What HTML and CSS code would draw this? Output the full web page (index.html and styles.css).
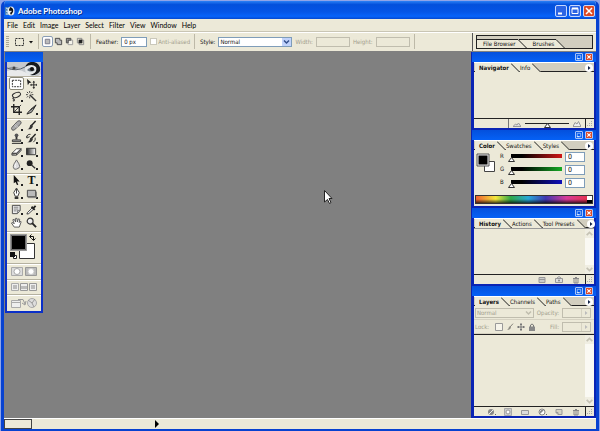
FILE: index.html
```html
<!DOCTYPE html>
<html lang="en">
<head>
    <meta charset="UTF-8">
    <title>Adobe Photoshop</title>
    <link rel="stylesheet" href="styles.css">
</head>

<body>

<!-- Shared icons -->
<svg class="defs" aria-hidden="true">
    <symbol id="slant" viewBox="0 0 9 9"><path d="M0 9V0L9 9Z" fill="#ece9d8"/><path d="M0 .5L8.500 9" stroke="#222" fill="none"/></symbol>
    <symbol id="flyout" viewBox="0 0 8 8"><circle cx="4" cy="4" r="4" fill="#fff"/><path d="M3 2L5.500 4L3 6Z" fill="#124"/></symbol>
    <symbol id="min" viewBox="0 0 7 7"><path d="M1.500 1.500H5.500V5.500H1.500Z" fill="none" stroke="#9cc3ff"/><path d="M1 5.500H4" stroke="#fff"/></symbol>
    <symbol id="cross" viewBox="0 0 7 7"><path d="M1.500 1.500L5.500 5.500M5.500 1.500L1.500 5.500" stroke="#fff" stroke-width="1.300"/></symbol>
    <symbol id="down" viewBox="0 0 8 8"><path d="M1.500 2.500L4 5L6.500 2.500" fill="none" stroke="currentColor" stroke-width="1.500"/></symbol>
    <symbol id="up" viewBox="0 0 8 8"><path d="M1.500 5.500L4 3L6.500 5.500" fill="none" stroke="currentColor" stroke-width="1.500"/></symbol>
    <symbol id="page" viewBox="0 0 10 8"><path d="M2 1.500H8V6.500H4L2 4.500ZM2 4.500H4V6.500" fill="#d8d5c5" stroke="#999"/></symbol>
    <symbol id="trash" viewBox="0 0 10 8"><path d="M2 2.500H8M4 1.500H6M3 3V7H7V3M5 3V7" fill="none" stroke="#888"/></symbol>
    <symbol id="grip" viewBox="0 0 8 8"><path d="M5 2H7M3 4H7M1 6H7" stroke="#aaa" stroke-dasharray="1 1"/></symbol>
    <symbol id="brush" viewBox="0 0 12 12"><path d="M10.500 1L6 6" stroke="#222" stroke-width="1.500"/><path d="M6.500 5Q4 5 4 7.500Q3.500 9.500 1.500 10Q6 11 7.500 7Z" fill="#333"/></symbol>
</svg>

<div class="window">

    <header class="titlebar">
        <svg class="app-icon" viewBox="0 0 10 10"><path d="M0 1H4V9H0Z" fill="#4b7fb5"/><path d="M1 2L3 3M1 5L3 6M1 8H3" stroke="#cfe5f7"/><ellipse cx="6" cy="5" rx="3.500" ry="4.500" fill="#e8ecef"/><path d="M5 1Q9 2 8 6L6 9L5 7L7 5L4 4Z" fill="#111"/><circle cx="5" cy="4" r="1" fill="#222"/></svg>
        <h1>Adobe Photoshop</h1>
        <div class="window-buttons">
            <button class="win-btn" aria-label="Minimize"><svg viewBox="0 0 10 10"><path d="M2 7.500H6" stroke="#fff" stroke-width="2"/></svg></button>
            <button class="win-btn" aria-label="Maximize"><svg viewBox="0 0 10 10"><path d="M2 2.500H8V7.500H2Z" fill="none" stroke="#fff"/><path d="M2 2.500H8" stroke="#fff" stroke-width="2"/></svg></button>
            <button class="win-btn close" aria-label="Close"><svg viewBox="0 0 10 10"><path d="M2 2L8 8M8 2L2 8" stroke="#fff" stroke-width="1.500"/></svg></button>
        </div>
    </header>

    <nav class="menubar">
        <a href="#">File</a>
        <a href="#">Edit</a>
        <a href="#">Image</a>
        <a href="#">Layer</a>
        <a href="#">Select</a>
        <a href="#">Filter</a>
        <a href="#">View</a>
        <a href="#">Window</a>
        <a href="#">Help</a>
    </nav>

    <!-- Tool options -->
    <div class="options">
        <div class="option-group current-tool">
            <span class="gripper"></span>
            <button class="tool-preset" aria-label="Tool preset">
                <svg viewBox="0 0 20 10"><path d="M1.500 1.500H9.500V8.500H1.500Z" fill="none" stroke="#333" stroke-dasharray="2 1"/><path d="M15 4H19L17 6.500Z" fill="#111"/></svg>
            </button>
        </div>
        <div class="option-group modes">
            <button class="mode pressed" aria-label="New selection"><svg viewBox="0 0 10 10"><path d="M2.500 2.500H7.500V7.500H2.500Z" fill="#bbb" stroke="#778"/></svg></button>
            <button class="mode" aria-label="Add to selection"><svg viewBox="0 0 10 10"><path d="M1.500 1.500H6.500V3.500H8.500V8.500H3.500V6.500H1.500Z" fill="#bbb" stroke="#444"/></svg></button>
            <button class="mode" aria-label="Subtract from selection"><svg viewBox="0 0 10 10"><path d="M3.500 3.500H8.500V8.500H3.500Z" fill="#f5f3ea" stroke="#999"/><path d="M1.500 6.500V1.500H6.500V3.500H3.500V6.500Z" fill="#999" stroke="#444"/></svg></button>
            <button class="mode" aria-label="Intersect with selection"><svg viewBox="0 0 10 10"><path d="M1.500 1.500H6.500V6.500H1.500ZM3.500 3.500H8.500V8.500H3.500Z" fill="none" stroke="#888"/><path d="M3 3H7V7H3Z" fill="#222"/></svg></button>
        </div>
        <div class="option-group">
            <label for="feather">Feather:</label>
            <input type="text" id="feather" class="field short" value="0 px">
            <input type="checkbox" id="antialiased" disabled>
            <label for="antialiased" class="off check-label">Anti-aliased</label>
        </div>
        <div class="option-group">
            <label for="style">Style:</label>
            <span class="dropdown style-drop">
                <select id="style"><option>Normal</option></select>
                <svg class="drop-arrow"><use href="#down"/></svg>
            </span>
            <label for="width" class="off">Width:</label>
            <input type="text" id="width" class="field" disabled>
            <label for="height" class="off">Height:</label>
            <input type="text" id="height" class="field" disabled>
        </div>
        <div class="well">
            <div class="tabs well-tabs">
                <button class="tab">File Browser</button><svg class="slant"><use href="#slant"/></svg>
                <button class="tab">Brushes</button><svg class="slant"><use href="#slant"/></svg>
            </div>
        </div>
    </div>

    <main class="workspace">

        <!-- Toolbox -->
        <aside class="toolbox">
            <div class="palette-title"></div>
            <svg class="logo" viewBox="0 0 34 14" preserveAspectRatio="none">
                <path d="M0 0H34V14H0Z" fill="#c5c9cd"/><path d="M0 9Q10 5 20 11T34 12V14H0Z" fill="#e9eaea"/>
                <path d="M1 6Q7 3 12 6Q7 8 1 6" fill="#8f979e"/><path d="M0 6Q9 10 18 5" stroke="#59636b" fill="none"/><circle cx="7" cy="6" r="1.500" fill="#444"/>
                <circle cx="25" cy="7" r="7" fill="#e4e8ea"/><path d="M18 5Q21 -1 27 0Q34 2 33 9Q30 14 23 13Q31 11 29 5Q25 1 18 5Z" fill="#15191d"/><path d="M20 8Q24 3 28 8Q24 11 20 8" fill="#68737d"/><circle cx="25" cy="7" r="2" fill="#111"/>
            </svg>
            <div class="tools">
                <button class="tool pressed" aria-label="Marquee"><svg viewBox="0 0 12 12"><path d="M1.500 2.500H10.500V9.500H1.500Z" fill="#fff" stroke="#222" stroke-dasharray="2 1"/></svg></button>
                <button class="tool" aria-label="Move"><svg viewBox="0 0 12 12"><path d="M1 1L6 5L3.500 5.500L2 8Z" fill="#222"/><path d="M8.500 4V11M5 7.500H12" stroke="#222"/><path d="M7 5L8.500 3L10 5ZM7 10L8.500 12L10 10ZM6 6V9L4.500 7.500ZM11 6V9L12 7.500Z" fill="#222"/></svg></button>
                <button class="tool more" aria-label="Lasso"><svg viewBox="0 0 12 12"><path d="M3 7Q0 5 3 3T9 1.500Q12 3 9 5.500T3 7Q1 8 3 9T2 11" fill="none" stroke="#333" stroke-width="1.200"/></svg></button>
                <button class="tool" aria-label="Magic wand"><svg viewBox="0 0 12 12"><path d="M4 4L11 11" stroke="#333" stroke-width="1.500"/><path d="M4 0V2M0 4H2M6 4H8M4 6V8M1 1L2.500 2.500M7 1L5.500 2.500M1 7L2.500 5.500" stroke="#333"/></svg></button>
                <button class="tool" aria-label="Crop"><svg viewBox="0 0 12 12"><path d="M3 0V9H12M0 3H9V12" fill="none" stroke="#222" stroke-width="1.500"/><path d="M3 9L11 1" stroke="#333"/></svg></button>
                <button class="tool more" aria-label="Slice"><svg viewBox="0 0 12 12"><path d="M11 1L8 6L5 6Z" fill="#444" stroke="#222"/><path d="M7 5L3 8L1 11L6 9L8 6" fill="#aaa" stroke="#222"/></svg></button>
            </div>
            <div class="tools">
                <button class="tool more" aria-label="Healing brush"><svg viewBox="0 0 12 12"><path d="M1 8L7 1.500Q9 0 10.500 1.500T10 5L4 10.500Q2 12 1 10.500T1 8Z" fill="#aaa" stroke="#555"/><path d="M4 6L7 9M5 5L8 8" stroke="#eee" stroke-dasharray="1 1"/></svg></button>
                <button class="tool more" aria-label="Brush"><svg viewBox="0 0 12 12"><use href="#brush"/></svg></button>
                <button class="tool more" aria-label="Clone stamp"><svg viewBox="0 0 12 12"><circle cx="6" cy="2.500" r="2" fill="#555"/><path d="M6 4V7" stroke="#333" stroke-width="2"/><path d="M1.500 7.500H10.500V9.500H1.500Z" fill="#aaa" stroke="#333"/><path d="M1 11.500H11" stroke="#333"/></svg></button>
                <button class="tool more" aria-label="History brush"><svg viewBox="0 0 12 12"><use href="#brush"/><path d="M1 5Q1 1 5 1.500M0 3L1 5.500L4 4M10 5Q11 8 8 10" fill="none" stroke="#333"/></svg></button>
                <button class="tool more" aria-label="Eraser"><svg viewBox="0 0 12 12"><path d="M1 8L6 3H11L6 8Z" fill="#fff" stroke="#444"/><path d="M1 8V10H6L11 5V3L6 8V10M6 8H1" fill="#999" stroke="#444"/></svg></button>
                <button class="tool more" aria-label="Gradient"><svg viewBox="0 0 12 12"><defs><linearGradient id="grad"><stop stop-color="#222"/><stop offset="1" stop-color="#fff"/></linearGradient></defs><path d="M.5 2.500H10.500V9.500H.5Z" fill="url(#grad)" stroke="#333"/></svg></button>
                <button class="tool more" aria-label="Blur"><svg viewBox="0 0 12 12"><path d="M6 1Q9.500 6 9.500 8T6 11T2.500 8Q2.500 6 6 1Z" fill="#ddd" stroke="#666"/><path d="M5 5Q3.500 8 5 9" stroke="#fff" fill="none"/></svg></button>
                <button class="tool more" aria-label="Burn"><svg viewBox="0 0 12 12"><circle cx="4" cy="4.500" r="3.200" fill="#222"/><path d="M6 6.500L10 10" stroke="#333" stroke-width="1.500"/></svg></button>
            </div>
            <div class="tools">
                <button class="tool more" aria-label="Path selection"><svg viewBox="0 0 12 12"><path d="M3 0L9.500 7H6.500L8 10.500L6.500 11L5 7.500L3 9Z" fill="#111"/></svg></button>
                <button class="tool more type">T</button>
                <button class="tool more" aria-label="Pen"><svg viewBox="0 0 12 12"><path d="M6 0L9 5L7.500 9H4.500L3 5ZM6 1V6" fill="#fff" stroke="#333"/><path d="M4 9.500H8V12H4Z" fill="#333"/></svg></button>
                <button class="tool more" aria-label="Rectangle"><svg viewBox="0 0 12 12"><path d="M1.500 2.500H10.500V9.500H1.500Z" fill="#bbb" stroke="#444"/><path d="M2 10.500H11.500V4" stroke="#777" fill="none"/></svg></button>
            </div>
            <div class="tools">
                <button class="tool more" aria-label="Notes"><svg viewBox="0 0 12 12"><path d="M1.500 1.500H10V7L7 10.500H1.500Z" fill="#eee" stroke="#444"/><path d="M7 10.500V7H10M3 3.500H8M3 5.500H8M3 7.500H6" fill="none" stroke="#777"/></svg></button>
                <button class="tool more" aria-label="Eyedropper"><svg viewBox="0 0 12 12"><path d="M7.500 3.500L1.500 9.500L1 11L3 10.500L9 5" fill="#fff" stroke="#333"/><path d="M6 3L9.500 6.500M8 4.500L10.500 2" stroke="#222" stroke-width="2"/></svg></button>
                <button class="tool" aria-label="Hand"><svg viewBox="0 0 12 12"><path d="M3.500 11L.5 6.500L2 6L3.500 7.500L2 3L3.500 2.500L5 5.500V1.500H6.500L7 5.500L8 2L9.500 2.500L9 6L10.500 4.500L11 5.500L9 11Z" fill="#fff" stroke="#555"/></svg></button>
                <button class="tool" aria-label="Zoom"><svg viewBox="0 0 12 12"><circle cx="4.500" cy="4.500" r="3.200" fill="#eee" stroke="#333" stroke-width="1.300"/><path d="M7 7L11 11" stroke="#222" stroke-width="2"/></svg></button>
            </div>
            <div class="tool-row colors">
                <svg viewBox="0 0 34 31"><path d="M12.500 11.500H27.500V26.500H12.500Z" fill="#fff" stroke="#333"/><path d="M3.500 2.500H19.500V18.500H3.500Z" fill="#000" stroke="#999"/><path d="M4.500 3.500H18.500V17.500H4.500Z" fill="#000" stroke="#ddd" stroke-width=".5"/><path d="M23 4.500H26.500V8M24.500 2.500L22.500 4.500L24.500 6.500M24.500 6.500L26.500 8.500L28.500 6.500" fill="none" stroke="#111"/><path d="M6.500 23.500H9.500V26.500H6.500Z" fill="#fff" stroke="#222"/><path d="M3 20H8V25H3Z" fill="#111"/></svg>
            </div>
            <div class="tool-row masks">
                <button class="mini" aria-label="Standard mode"><svg viewBox="0 0 12 9"><path d="M.5 .5H11.500V8.500H.5Z" fill="#ddd" stroke="#aaa"/><circle cx="6" cy="4.500" r="3" fill="#fff" stroke="#aaa"/></svg></button>
                <button class="mini" aria-label="Quick mask"><svg viewBox="0 0 12 9"><path d="M.5 .5H11.500V8.500H.5Z" fill="#bbb" stroke="#999"/><circle cx="6" cy="4.500" r="3" fill="#fff" stroke="#ccc"/></svg></button>
            </div>
            <div class="tool-row screens">
                <button class="mini" aria-label="Standard screen"><svg viewBox="0 0 8 8"><path d="M.5 .5H7.500V7.500H.5Z" fill="#eee" stroke="#aaa"/><path d="M2 2H6V6H2Z" fill="#bbb"/></svg></button>
                <button class="mini" aria-label="Full screen with menu"><svg viewBox="0 0 8 8"><path d="M.5 .5H7.500V7.500H.5Z" fill="#eee" stroke="#999"/><path d="M1 3H7V6H1Z" fill="#bbb"/></svg></button>
                <button class="mini" aria-label="Full screen"><svg viewBox="0 0 8 8"><path d="M.5 .5H7.500V7.500H.5Z" fill="#eee" stroke="#999"/><path d="M2 2H6V6H2Z" fill="#bbb"/></svg></button>
            </div>
            <div class="tool-row jump">
                <svg viewBox="0 0 28 12"><path d="M1.500 3.500H10.500V10.500H1.500ZM1.500 5.500H10.500" fill="#eee" stroke="#aaa"/><path d="M8 2.500H13L15 7M12 6L15 8L16 4" fill="none" stroke="#999"/><circle cx="22" cy="6" r="4.500" fill="#ddd" stroke="#aaa"/><path d="M18 3L22 6L25 2M22 6L24 10" fill="none" stroke="#999"/></svg>
            </div>
        </aside>

        <!-- Pointer -->
        <svg class="pointer" viewBox="0 0 9 14"><path d="M.5 .5L8 8.500H5L7 12.500L5.500 13.500L3.500 9.500L.5 12Z" fill="#fff" stroke="#222"/></svg>

        <!-- Palettes -->
        <div class="palettes">

            <section class="palette navigator">
                <div class="palette-title">
                    <button class="small-btn" aria-label="Collapse"><svg><use href="#min"/></svg></button>
                    <button class="small-btn close" aria-label="Close"><svg><use href="#cross"/></svg></button>
                </div>
                <div class="tabs">
                    <button class="tab active">Navigator</button><svg class="slant"><use href="#slant"/></svg>
                    <button class="tab">Info</button><svg class="slant"><use href="#slant"/></svg>
                    <button class="flyout" aria-label="Menu"><svg><use href="#flyout"/></svg></button>
                </div>
                <div class="palette-body"></div>
                <div class="zoom-bar">
                    <span class="zoom-value"></span>
                    <svg class="mount" viewBox="0 0 8 6"><path d="M0 5.500L2.500 3L4 4L5.500 2L8 5.500Z" fill="#ddd" stroke="#999"/></svg>
                    <input type="range" class="zoom-range" value="50" aria-label="Zoom">
                    <svg class="mount" viewBox="0 0 8 6"><path d="M0 5.500L2 1.500L4 3L5.500 .5L8 5.500Z" fill="#eee" stroke="#999"/></svg>
                    <svg class="grip"><use href="#grip"/></svg>
                </div>
            </section>

            <section class="palette color">
                <div class="palette-title">
                    <button class="small-btn" aria-label="Collapse"><svg><use href="#min"/></svg></button>
                    <button class="small-btn close" aria-label="Close"><svg><use href="#cross"/></svg></button>
                </div>
                <div class="tabs">
                    <button class="tab active">Color</button><svg class="slant"><use href="#slant"/></svg>
                    <button class="tab">Swatches</button><svg class="slant"><use href="#slant"/></svg>
                    <button class="tab">Styles</button><svg class="slant"><use href="#slant"/></svg>
                    <button class="flyout" aria-label="Menu"><svg><use href="#flyout"/></svg></button>
                </div>
                <div class="palette-body mixer">
                    <svg class="color-pair" viewBox="0 0 20 20"><path d="M8.500 8.500H18.500V18.500H8.500Z" fill="#fff" stroke="#444"/><path d="M1 1H13V13H1Z" fill="#eee" stroke="#555"/><path d="M2.500 2.500H11.500V11.500H2.500Z" fill="#000"/></svg>
                    <div class="channels">
                        <label for="red">R</label><input type="range" class="channel red" min="0" max="255" value="0" aria-label="Red"><input type="text" id="red" class="field" value="0">
                        <label for="green">G</label><input type="range" class="channel green" min="0" max="255" value="0" aria-label="Green"><input type="text" id="green" class="field" value="0">
                        <label for="blue">B</label><input type="range" class="channel blue" min="0" max="255" value="0" aria-label="Blue"><input type="text" id="blue" class="field" value="0">
                    </div>
                </div>
                <div class="spectrum"><span></span></div>
            </section>

            <section class="palette history">
                <div class="palette-title">
                    <button class="small-btn" aria-label="Collapse"><svg><use href="#min"/></svg></button>
                    <button class="small-btn close" aria-label="Close"><svg><use href="#cross"/></svg></button>
                </div>
                <div class="tabs">
                    <button class="tab active">History</button><svg class="slant"><use href="#slant"/></svg>
                    <button class="tab">Actions</button><svg class="slant"><use href="#slant"/></svg>
                    <button class="tab">Tool Presets</button><svg class="slant"><use href="#slant"/></svg>
                    <button class="flyout" aria-label="Menu"><svg><use href="#flyout"/></svg></button>
                </div>
                <div class="palette-body list">
                    <div class="scrollbar"><svg><use href="#up"/></svg><svg><use href="#down"/></svg></div>
                </div>
                <div class="palette-footer">
                    <svg viewBox="0 0 10 8"><path d="M2 1.500H8V6.500H2ZM2 3.500H8" fill="#ccc" stroke="#999"/></svg>
                    <svg viewBox="0 0 10 8"><path d="M1.500 2.500H8.500V6.500H1.500ZM3 2L5 .5L7 2" fill="#ddd" stroke="#999"/><circle cx="5" cy="4.500" r="1" fill="#888"/></svg>
                    <svg><use href="#trash"/></svg>
                    <svg class="grip"><use href="#grip"/></svg>
                </div>
            </section>

            <section class="palette layers">
                <div class="palette-title">
                    <button class="small-btn" aria-label="Collapse"><svg><use href="#min"/></svg></button>
                    <button class="small-btn close" aria-label="Close"><svg><use href="#cross"/></svg></button>
                </div>
                <div class="tabs">
                    <button class="tab active">Layers</button><svg class="slant"><use href="#slant"/></svg>
                    <button class="tab">Channels</button><svg class="slant"><use href="#slant"/></svg>
                    <button class="tab">Paths</button><svg class="slant"><use href="#slant"/></svg>
                    <button class="flyout" aria-label="Menu"><svg><use href="#flyout"/></svg></button>
                </div>
                <div class="layer-row">
                    <span class="dropdown off-drop">
                        <select aria-label="Blend mode" disabled><option>Normal</option></select>
                        <svg class="drop-arrow"><use href="#down"/></svg>
                    </span>
                    <label for="opacity" class="off">Opacity:</label>
                    <span class="stepper"><input type="text" id="opacity" disabled><svg viewBox="0 0 8 8"><path d="M3 2L5.500 4L3 6Z" fill="#bbb"/></svg></span>
                </div>
                <div class="layer-row">
                    <span class="off lock">Lock:</span>
                    <svg class="lock-icon" viewBox="0 0 8 8"><path d="M.5 .5H7.500V7.500H.5Z" fill="#f6f4ea" stroke="#999"/></svg>
                    <svg class="lock-icon"><use href="#brush" opacity=".5"/></svg>
                    <svg class="lock-icon" viewBox="0 0 8 8"><path d="M4 0V8M0 4H8M3 1.500H5M3 6.500H5M1.500 3V5M6.500 3V5" stroke="#777"/></svg>
                    <svg class="lock-icon" viewBox="0 0 8 8"><path d="M2.500 4V2Q4 0 5.500 2V4" fill="none" stroke="#777"/><path d="M1 3.500H7V8H1Z" fill="#888"/></svg>
                    <label for="fill" class="off fill-label">Fill:</label>
                    <span class="stepper"><input type="text" id="fill" disabled><svg viewBox="0 0 8 8"><path d="M3 2L5.500 4L3 6Z" fill="#bbb"/></svg></span>
                </div>
                <div class="palette-body list ruled">
                    <div class="scrollbar"><svg><use href="#up"/></svg><svg><use href="#down"/></svg></div>
                </div>
                <div class="palette-footer">
                    <svg viewBox="0 0 10 8"><circle cx="5" cy="4" r="3" fill="#888"/><path d="M3 6L7 2" stroke="#eee"/><path d="M9 6H10V7H9Z" fill="#666"/></svg>
                    <svg viewBox="0 0 10 8"><path d="M1.500 .5H8.500V7.500H1.500Z" fill="#ccc" stroke="#aaa"/><circle cx="5" cy="4" r="2" fill="#fff" stroke="#999"/></svg>
                    <svg viewBox="0 0 10 8"><path d="M1.500 2.500H8.500V6.500H1.500Z" fill="#ddd" stroke="#999"/></svg>
                    <svg viewBox="0 0 10 8"><circle cx="5" cy="4" r="3" fill="#fff" stroke="#888"/><path d="M3 6A3 3 0 0 1 7 2Z" fill="#888"/><path d="M9 6H10V7H9Z" fill="#666"/></svg>
                    <svg><use href="#page"/></svg>
                    <svg><use href="#trash"/></svg>
                    <svg class="grip"><use href="#grip"/></svg>
                </div>
            </section>

        </div>
    </main>

    <footer class="statusbar">
        <span class="zoom-box"></span>
        <button class="status-menu" aria-label="Status menu"><svg viewBox="0 0 4 8"><path d="M0 0L4 4L0 8Z" fill="#000"/></svg></button>
    </footer>

</div>

</body>
</html>
```

FILE: styles.css
```css
/* Page styling */
* {
    box-sizing: border-box;
}

body {
    margin: 0;
    height: 100vh;
    padding: 1px 1px 0;
    background-color: #8fa4e8;
    font-family: "DejaVu Sans Condensed", "DejaVu Sans", sans-serif;
    font-size: 6px;
    line-height: 8px;
    color: #111;
}

svg {
    display: block;
    flex: none;
}

.defs {
    display: none;
}

button,
input,
select {
    margin: 0;
    padding: 0;
    border: 0;
    border-radius: 0;
    background: none;
    font: inherit;
    color: inherit;
}

.off {
    color: #a19d8c;
}

/* Main window */
.window {
    display: flex;
    flex-direction: column;
    height: 100%;
    border: 3px solid #0842d0;
    border-top: 0;
    border-bottom-width: 2px;
    border-radius: 5px 5px 0 0;
    background-color: #ece9d8;
    overflow: hidden;
}

.titlebar {
    display: flex;
    align-items: center;
    gap: 3px;
    flex: none;
    height: 18px;
    margin: 0 -3px;
    padding: 2px 4px 0;
    background: linear-gradient(#2a80f5, #0350dc 20%, #0455e6 60%, #0663fa 85%, #0448d0);
}

.titlebar h1 {
    flex: 1;
    margin: 0;
    font-family: Lato, sans-serif;
    font-size: 8px;
    line-height: 12px;
    font-weight: bold;
    color: #fff;
    text-shadow: 1px 1px #0a2f8c;
}

.app-icon {
    width: 10px;
    height: 10px;
}

.window-buttons {
    display: flex;
    gap: 2px;
}

.win-btn {
    width: 12px;
    height: 12px;
    border: 1px solid #c5d8ff;
    border-radius: 2px;
    background-color: #2b64e4;
}

.win-btn svg {
    width: 10px;
    height: 10px;
}

.win-btn.close,
.small-btn.close {
    background-color: #dd4a26;
}

.menubar {
    display: flex;
    align-items: center;
    gap: 5px;
    flex: none;
    height: 12px;
    padding-left: 3px;
    font-family: Lato, sans-serif;
    font-size: 7px;
}

.menubar a {
    color: #000;
    text-decoration: none;
}

/* Options bar */
.options {
    display: flex;
    align-items: center;
    flex: none;
    height: 20px;
    border-top: 1px solid #c9c5b4;
    box-shadow: inset 0 1px #fff;
}

.option-group {
    display: flex;
    align-items: center;
    gap: 3px;
    height: 15px;
    padding: 0 4px 0 5px;
    border-right: 1px solid #bdb9a8;
}

.gripper {
    width: 3px;
    height: 12px;
    background: repeating-linear-gradient(#aaa795 0 1px, #ece9d8 1px 2px);
}

.current-tool {
    gap: 5px;
    padding: 0 4px 0 2px;
}

.tool-preset svg {
    width: 20px;
    height: 10px;
}

.modes {
    gap: 0;
    padding: 0 4px 0 3px;
}

.mode {
    width: 11px;
    height: 11px;
    border: 1px solid transparent;
}

.mode svg {
    width: 9px;
    height: 9px;
}

.mode.pressed {
    border-color: #8a9db5;
    border-radius: 2px;
    background-color: #fff;
}

.field {
    width: 34px;
    height: 10px;
    padding: 0 2px;
    border: 1px solid #7f9db9;
    background-color: #fff;
    line-height: 8px;
}

.field:disabled {
    border-color: #c0bdae;
    background-color: #ece9d8;
}

.field.short {
    width: 26px;
}

input[type="checkbox"] {
    appearance: none;
    width: 7px;
    height: 7px;
    border: 1px solid #cac8bb;
    background-color: #fff;
}

.check-label {
    margin-left: -2px;
}

.dropdown {
    display: flex;
    align-items: center;
    height: 10px;
    border: 1px solid #7f9db9;
    background-color: #fff;
}

.dropdown select {
    appearance: none;
    flex: 1;
    min-width: 0;
    height: 8px;
    padding-left: 1px;
    line-height: 8px;
}

.drop-arrow {
    width: 9px;
    height: 8px;
    color: #34508c;
    background-color: #c1d3fb;
}

.style-drop {
    width: 74px;
}

.off-drop {
    flex: 1;
    border-color: #c0bdae;
    background-color: #ece9d8;
    color: #a19d8c;
}

.off-drop select {
    opacity: 1;
}

.off-drop .drop-arrow {
    color: #c0bdae;
    background: none;
}

/* Tabs */
.tabs {
    display: flex;
    flex: none;
    background-color: #d2cebf;
}

.tab {
    height: 9px;
    padding: 0 2px 0 4px;
    background-color: #ece9d8;
    line-height: 8px;
    white-space: nowrap;
}

.slant {
    width: 9px;
    height: 9px;
}

.slant + .tab {
    margin-left: -8px;
    padding-left: 8px;
    background: linear-gradient(45deg, transparent 6px, #ece9d8 6px);
}

.palette .tabs {
    height: 10px;
    padding-left: 1px;
    border-top: 1px solid #fff;
    box-shadow: inset 0 -1px #222;
}

.tab.active {
    height: 10px;
    font-weight: bold;
}

.flyout {
    margin-left: auto;
    padding: 0 1px;
}

.flyout svg {
    width: 8px;
    height: 8px;
}

/* Palette well */
.well {
    display: flex;
    align-items: center;
    width: 124px;
    height: 18px;
    margin-left: auto;
    padding: 0 3px;
    border-left: 1px solid #555;
}

.well-tabs {
    align-items: flex-end;
    flex: 1;
    height: 14px;
    border: 1px solid #222;
}

.well-tabs .tab {
    padding-left: 6px;
    border-top: 1px solid #222;
}

.well-tabs .slant + .tab {
    padding-left: 14px;
}

/* Workspace */
.workspace {
    display: flex;
    justify-content: space-between;
    align-items: flex-start;
    flex: 1;
    min-height: 0;
    position: relative;
    padding-left: 1px;
    background-color: #808080;
}

.pointer {
    position: absolute;
    left: 54%;
    top: 38%;
    width: 9px;
    height: 14px;
}

/* Toolbox */
.toolbox {
    width: 38px;
    margin-top: 1px;
    border: 2px solid #0a2fc8;
    border-top: 0;
    background-color: #ece9d8;
}

.palette-title {
    display: flex;
    justify-content: flex-end;
    align-items: center;
    gap: 2px;
    flex: none;
    height: 10px;
    margin: 0 -2px;
    padding-right: 3px;
    background: linear-gradient(#0450dc, #0561f6);
}

.logo {
    width: 100%;
    height: 14px;
}

.tools {
    display: grid;
    grid-template-columns: 1fr 1fr;
    padding: 0 2px 2px;
    border-top: 1px solid #b5b1a0;
    box-shadow: inset 0 1px #fff;
}

.tool {
    display: flex;
    justify-content: center;
    align-items: center;
    height: 13px;
    border: 1px solid transparent;
}

.tool svg {
    width: 11px;
    height: 11px;
}

.tool.pressed {
    border-color: #8a8878;
    border-radius: 2px;
    background-color: #fff;
}

.more {
    background: linear-gradient(#222, #222) right bottom / 2px 2px no-repeat;
}

.type {
    font-family: "Liberation Serif", serif;
    font-size: 12px;
    font-weight: bold;
    line-height: 11px;
}

.tool-row {
    display: flex;
    justify-content: space-between;
    align-items: center;
    border-top: 1px solid #b5b1a0;
    box-shadow: inset 0 1px #fff;
}

.colors svg {
    width: 34px;
    height: 31px;
}

.masks {
    height: 16px;
    padding: 0 4px;
}

.masks svg {
    width: 12px;
    height: 9px;
}

.screens {
    height: 15px;
    padding: 0 4px;
}

.screens svg {
    width: 8px;
    height: 8px;
}

.jump {
    justify-content: center;
    height: 17px;
}

.jump svg {
    width: 28px;
    height: 12px;
}

/* Palettes */
.palettes {
    display: flex;
    flex-direction: column;
    width: 125px;
    height: 100%;
    padding-top: 1px;
}

.palette {
    display: flex;
    flex-direction: column;
    flex: none;
    height: 78px;
    border: 2px solid #0a24b4;
    border-top: 0;
    border-left-width: 3px;
    background-color: #ece9d8;
}

.palette.layers {
    flex: 1;
}

.small-btn {
    width: 8px;
    height: 8px;
    border: 1px solid #a9c4fa;
    border-radius: 1px;
}

.small-btn svg {
    width: 6px;
    height: 6px;
}

.palette-body {
    flex: 1;
    min-height: 0;
}

.zoom-bar {
    display: flex;
    align-items: center;
    gap: 4px;
    height: 10px;
    border-top: 1px solid #222;
}

.zoom-value {
    width: 35px;
    height: 9px;
    border-right: 1px solid #777;
}

.mount {
    width: 8px;
    height: 6px;
}

.zoom-bar .grip {
    margin-left: auto;
}

input[type="range"] {
    appearance: none;
    min-width: 0;
    height: 9px;
}

input[type="range"]::-webkit-slider-thumb {
    appearance: none;
    width: 7px;
    height: 5px;
    background: url("data:image/svg+xml,%3Csvg xmlns='http://www.w3.org/2000/svg' viewBox='0 0 7 5'%3E%3Cpath d='M.5 4.500L3.500 .5L6.500 4.500Z' fill='%23fff' stroke='%23333'/%3E%3C/svg%3E") center / 7px 5px no-repeat;
}

.zoom-range {
    flex: 1;
    background: linear-gradient(#222, #222) center / 100% 1px no-repeat;
}

.zoom-range::-webkit-slider-thumb {
    margin-top: 4px;
}

/* Color palette */
.mixer {
    display: flex;
    align-items: flex-start;
    gap: 4px;
    padding: 2px 9px 0 2px;
}

.color-pair {
    width: 20px;
    height: 20px;
    margin-top: 1px;
}

.channels {
    display: grid;
    grid-template-columns: 5px 1fr 20px;
    gap: 3px;
    flex: 1;
}

/* The track starts under the middle of the thumb */
.channel {
    width: 100%;
    height: 10px;
    background: 3px 2px / 100% 4px no-repeat;
}

.channel::-webkit-slider-thumb {
    margin-top: 6px;
}

.red {
    background-image: linear-gradient(90deg, #000 20%, #e01818);
}

.green {
    background-image: linear-gradient(90deg, #000 20%, #18b828);
}

.blue {
    background-image: linear-gradient(90deg, #000 20%, #1010c8);
}

.channels .field {
    width: 20px;
    font-size: 7px;
}

.spectrum {
    display: flex;
    justify-content: flex-end;
    height: 9px;
    margin: 0 1px 2px;
    border: 1px solid #333;
    background: linear-gradient(transparent 45%, rgba(0, 0, 0, .7)), linear-gradient(90deg, #f06030, #f4e83c 17%, #30a848 30%, #28a8d8 45%, #4038b0 60%, #d83c98 78%, #e83040);
}

.spectrum span {
    width: 5px;
    background: linear-gradient(#fff 50%, #000 50%);
}

/* Lists */
.list {
    display: flex;
    justify-content: flex-end;
}

.history .list {
    border-top: 1px solid #999;
}

.ruled {
    border-top: 1px solid #222;
}

.scrollbar {
    display: flex;
    flex-direction: column;
    justify-content: space-between;
    width: 9px;
    background-color: #faf9f3;
    color: #c6c3b5;
}

.scrollbar svg {
    width: 9px;
    height: 9px;
    background-color: #f0eee2;
}

.palette-footer {
    display: flex;
    justify-content: flex-end;
    align-items: center;
    gap: 7px;
    flex: none;
    height: 10px;
    border-top: 1px solid #222;
}

.palette-footer svg {
    width: 10px;
    height: 8px;
}

.grip,
.palette-footer .grip {
    width: 9px;
    height: 9px;
    margin-left: -3px;
    border-left: 1px solid #222;
}

/* Layers palette */
.layer-row {
    display: flex;
    align-items: center;
    gap: 3px;
    flex: none;
    height: 14px;
    padding: 0 3px 0 1px;
    border-bottom: 1px solid #d6d2c2;
}

.stepper {
    display: flex;
    align-items: center;
    width: 29px;
    height: 10px;
    border: 1px solid #c0bdae;
}

.stepper input {
    width: 19px;
    height: 8px;
    border-right: 1px solid #d6d2c2;
}

.stepper svg {
    width: 8px;
    height: 8px;
}

.lock {
    width: 17px;
}

.lock-icon {
    width: 8px;
    height: 8px;
}

.fill-label {
    margin-left: auto;
}

/* Status bar */
.statusbar {
    display: flex;
    align-items: center;
    flex: none;
    height: 11px;
    border-top: 1px solid #fff;
}

.zoom-box {
    width: 28px;
    height: 10px;
    border: 1px solid #444;
}

.status-menu {
    margin-left: 123px;
}

.status-menu svg {
    width: 4px;
    height: 8px;
}
```
